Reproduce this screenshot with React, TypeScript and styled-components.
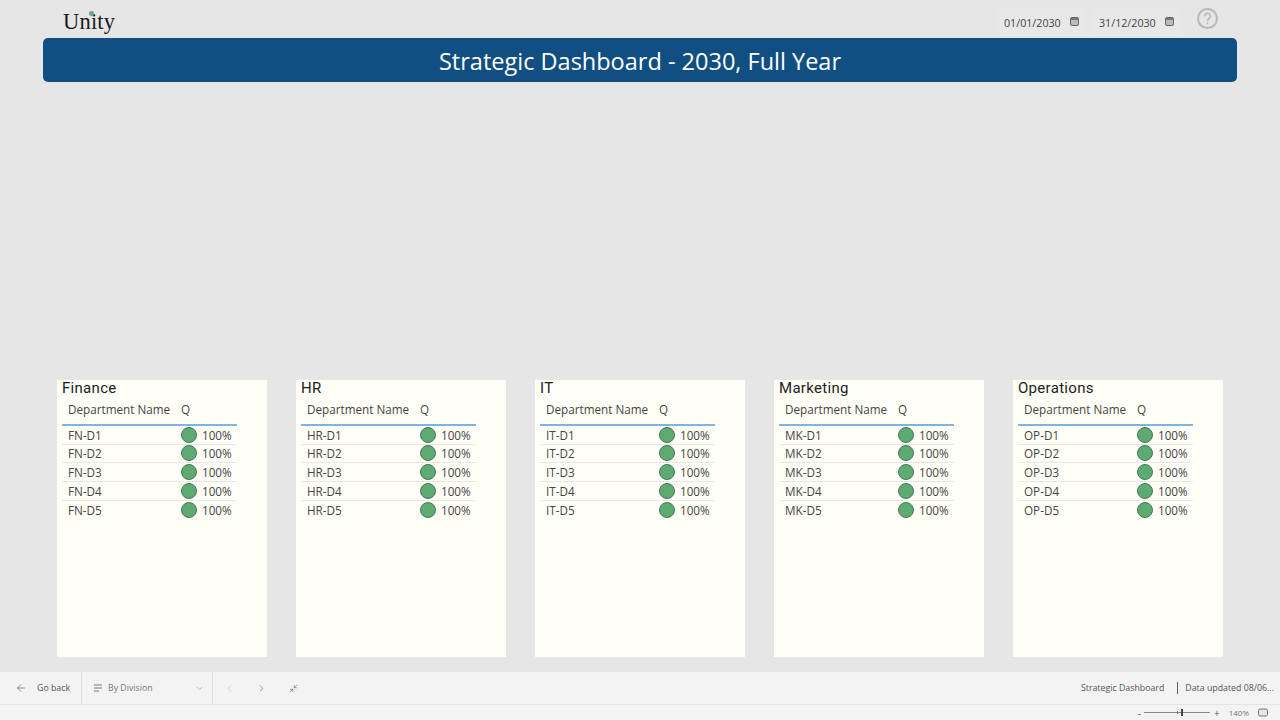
import React from 'react'
import styled, { createGlobalStyle } from 'styled-components'
import { ArrowLeft, ChevronDown, ChevronLeft, ChevronRight, Minimize2 } from 'lucide-react'

const GlobalStyle = createGlobalStyle`
  html, body {
    margin: 0;
    padding: 0;
    overflow: hidden;
  }
  body {
    font-family: "Open Sans", "Noto Sans", sans-serif;
  }
`

const Page = styled.div`
  display: flex;
  flex-direction: column;
  width: 1280px;
  height: 720px;
  background: #e6e6e6;
`

const Report = styled.div`
  flex: 1;
  display: flex;
  flex-direction: column;
  padding: 0 43px;
  min-height: 0;
`

const TopRow = styled.div`
  display: flex;
  align-items: flex-start;
  justify-content: space-between;
  height: 38px;
`

const Logo = styled.div`
  position: relative;
  margin: 7px 0 0 20px;
  font-family: "Liberation Serif", serif;
  font-size: 22.5px;
  line-height: 30px;
  color: #1a1a1a;
  letter-spacing: 0.2px;
`

const LogoDot = styled.span`
  position: absolute;
  left: 26px;
  top: 4px;
  width: 5px;
  height: 5px;
  border-radius: 50%;
  background: #6aa583;
`

const TopControls = styled.div`
  display: flex;
  align-items: flex-start;
  margin-right: 19px;
`

const DateBox = styled.div`
  display: flex;
  align-items: center;
  justify-content: space-between;
  box-sizing: border-box;
  width: 88px;
  height: 26px;
  margin: 9px 7px 0 0;
  padding: 2px 6px 0 7px;
  background: #e8e8e8;
  font-size: 10.7px;
  color: #444;
`

const CalendarMark = styled.svg`
  margin-top: -3px;
`

const HelpWrap = styled.div`
  margin: 8px 0 0 10px;
  width: 21px;
  height: 21px;
`

const TitleBar = styled.div`
  box-sizing: border-box;
  height: 44px;
  padding-top: 2px;
  background: #114f83;
  border-radius: 5px;
  display: flex;
  align-items: center;
  justify-content: center;
  font-size: 23.5px;
  color: #fff;
`

const Cards = styled.div`
  display: flex;
  gap: 29.5px;
  margin: auto 0 15px 14px;
`

const Card = styled.section`
  box-sizing: border-box;
  width: 209.5px;
  height: 277px;
  background: #fffff7;
  padding: 0 0 0 5px;
`

const CardTitle = styled.h2`
  margin: 0;
  padding-top: 1px;
  font-family: "Roboto", sans-serif;
  font-weight: 400;
  font-size: 15px;
  line-height: 15px;
  color: #1c1c1c;
  letter-spacing: 0.3px;
`

const DeptTable = styled.div`
  width: 175px;
  padding-top: 5px;
`

const HeaderRow = styled.div`
  display: grid;
  grid-template-columns: 113px 1fr;
  padding: 0 0 0 6px;
  height: 23px;
  line-height: 16px;
  border-bottom: 2px solid #7cb4e4;
  font-size: 11.7px;
  color: #444;
`

const Row = styled.div`
  display: grid;
  grid-template-columns: 112.5px 1fr;
  padding: 0 0 0 6px;
  box-sizing: border-box;
  height: 18.67px;
  align-items: center;
  border-bottom: 1px solid #e8e8e2;
  font-size: 11.7px;
  color: #444;
  &:last-child {
    border-bottom: none;
  }
`

const Score = styled.div`
  display: flex;
  align-items: center;
  gap: 5.5px;
`

const Dot = styled.span`
  box-sizing: border-box;
  width: 16px;
  height: 16px;
  border-radius: 50%;
  background: #5dab70;
  border: 1px solid #44785a;
`

const Toolbar = styled.div`
  display: flex;
  align-items: stretch;
  height: 32px;
  background: #f3f3f3;
  border-bottom: 1px solid #e4e4e4;
  font-size: 8.8px;
  color: #555;
`

const BackButton = styled.div`
  display: flex;
  align-items: center;
  gap: 10px;
  width: 82px;
  box-sizing: border-box;
  padding-left: 15px;
  border-right: 1px solid #dedede;
`

const PageSelect = styled.div`
  display: flex;
  align-items: center;
  width: 131px;
  box-sizing: border-box;
  padding: 0 8px 0 12px;
  border-right: 1px solid #dedede;
  color: #777;
`

const SelectLabel = styled.span`
  flex: 1;
  margin-left: 5px;
`

const NavIcons = styled.div`
  display: flex;
  align-items: center;
  gap: 21px;
  padding-left: 11px;
`

const FullscreenIcon = styled(Minimize2)`
  margin-left: 1px;
`

const StatusText = styled.div`
  margin-left: auto;
  display: flex;
  align-items: center;
  padding-right: 6px;
  white-space: nowrap;
`

const Updated = styled.span`
  margin-left: 13px;
  padding-left: 7px;
  line-height: 12px;
  border-left: 1px solid #666;
`

const ZoomBar = styled.div`
  display: flex;
  align-items: center;
  justify-content: flex-end;
  height: 15px;
  background: #f3f3f3;
  padding-right: 12px;
  font-size: 8px;
  color: #777;
`

const ZoomSign = styled.span`
  font-size: 10px;
  line-height: 10px;
  color: #555;
`

const ZoomSlider = styled.div`
  position: relative;
  width: 66px;
  height: 1px;
  margin: 0 4px 0 3px;
  background: #888;
`

const ZoomTick = styled.span`
  position: absolute;
  left: 33px;
  top: -1px;
  width: 1px;
  height: 3px;
  background: #777;
`

const ZoomThumb = styled.span`
  position: absolute;
  left: 37px;
  top: -3px;
  width: 2px;
  height: 7px;
  background: #444;
`

const ZoomLabel = styled.span`
  margin: 0 9px;
`

const divisions = [
  { name: 'Finance', code: 'FN' },
  { name: 'HR', code: 'HR' },
  { name: 'IT', code: 'IT' },
  { name: 'Marketing', code: 'MK' },
  { name: 'Operations', code: 'OP' },
]

const CalendarIcon = () => (
  <CalendarMark width="9" height="9" viewBox="0 0 9 9">
    <rect x="0.5" y="0.5" width="8" height="8" rx="1.5" fill="#bbb" stroke="#666" />
    <rect x="1" y="1" width="7" height="2" fill="#777" />
  </CalendarMark>
)

const HelpIcon = () => (
  <svg width="21" height="21" viewBox="0 0 21 21">
    <circle cx="10.5" cy="10.5" r="9.5" fill="none" stroke="#b8b8b8" strokeWidth="2" />
    <path d="M7.8 8.2a2.8 2.8 0 1 1 4.3 2.3c-1 .7-1.6 1.2-1.6 2.5" fill="none" stroke="#b8b8b8" strokeWidth="1.6" />
    <circle cx="10.5" cy="15.6" r="1" fill="#b8b8b8" />
  </svg>
)

const ListIcon = () => (
  <svg width="9" height="8" viewBox="0 0 9 8">
    <path d="M0 1h8M0 4h8M0 7h5" stroke="#777" strokeWidth="1" fill="none" />
  </svg>
)

const FitIcon = () => (
  <svg width="10" height="9" viewBox="0 0 10 9">
    <rect x="0.5" y="1" width="9" height="7" rx="1.5" fill="#e6e6e6" stroke="#777" />
  </svg>
)

const App = () => (
  <Page>
    <GlobalStyle />
    <Report>
      <TopRow>
        <Logo>
          Unity
          <LogoDot />
        </Logo>
        <TopControls>
          <DateBox>
            01/01/2030
            <CalendarIcon />
          </DateBox>
          <DateBox>
            31/12/2030
            <CalendarIcon />
          </DateBox>
          <HelpWrap>
            <HelpIcon />
          </HelpWrap>
        </TopControls>
      </TopRow>
      <TitleBar>Strategic Dashboard - 2030, Full Year</TitleBar>
      <Cards>
        {divisions.map((d) => (
          <Card key={d.code}>
            <CardTitle>{d.name}</CardTitle>
            <DeptTable>
              <HeaderRow>
                <span>Department Name</span>
                <span>Q</span>
              </HeaderRow>
              {[1, 2, 3, 4, 5].map((n) => (
                <Row key={n}>
                  <span>
                    {d.code}-D{n}
                  </span>
                  <Score>
                    <Dot />
                    100%
                  </Score>
                </Row>
              ))}
            </DeptTable>
          </Card>
        ))}
      </Cards>
    </Report>
    <Toolbar>
      <BackButton>
        <ArrowLeft size={12} strokeWidth={1.2} />
        Go back
      </BackButton>
      <PageSelect>
        <ListIcon />
        <SelectLabel>By Division</SelectLabel>
        <ChevronDown size={9} strokeWidth={1.2} />
      </PageSelect>
      <NavIcons>
        <ChevronLeft size={11} strokeWidth={1.2} color="#bbb" />
        <ChevronRight size={11} strokeWidth={1.2} />
        <FullscreenIcon size={9} strokeWidth={1.4} />
      </NavIcons>
      <StatusText>
        Strategic Dashboard
        <Updated>Data updated 08/06...</Updated>
      </StatusText>
    </Toolbar>
    <ZoomBar>
      <ZoomSign>-</ZoomSign>
      <ZoomSlider>
        <ZoomTick />
        <ZoomThumb />
      </ZoomSlider>
      <ZoomSign>+</ZoomSign>
      <ZoomLabel>140%</ZoomLabel>
      <FitIcon />
    </ZoomBar>
  </Page>
)

export default App
